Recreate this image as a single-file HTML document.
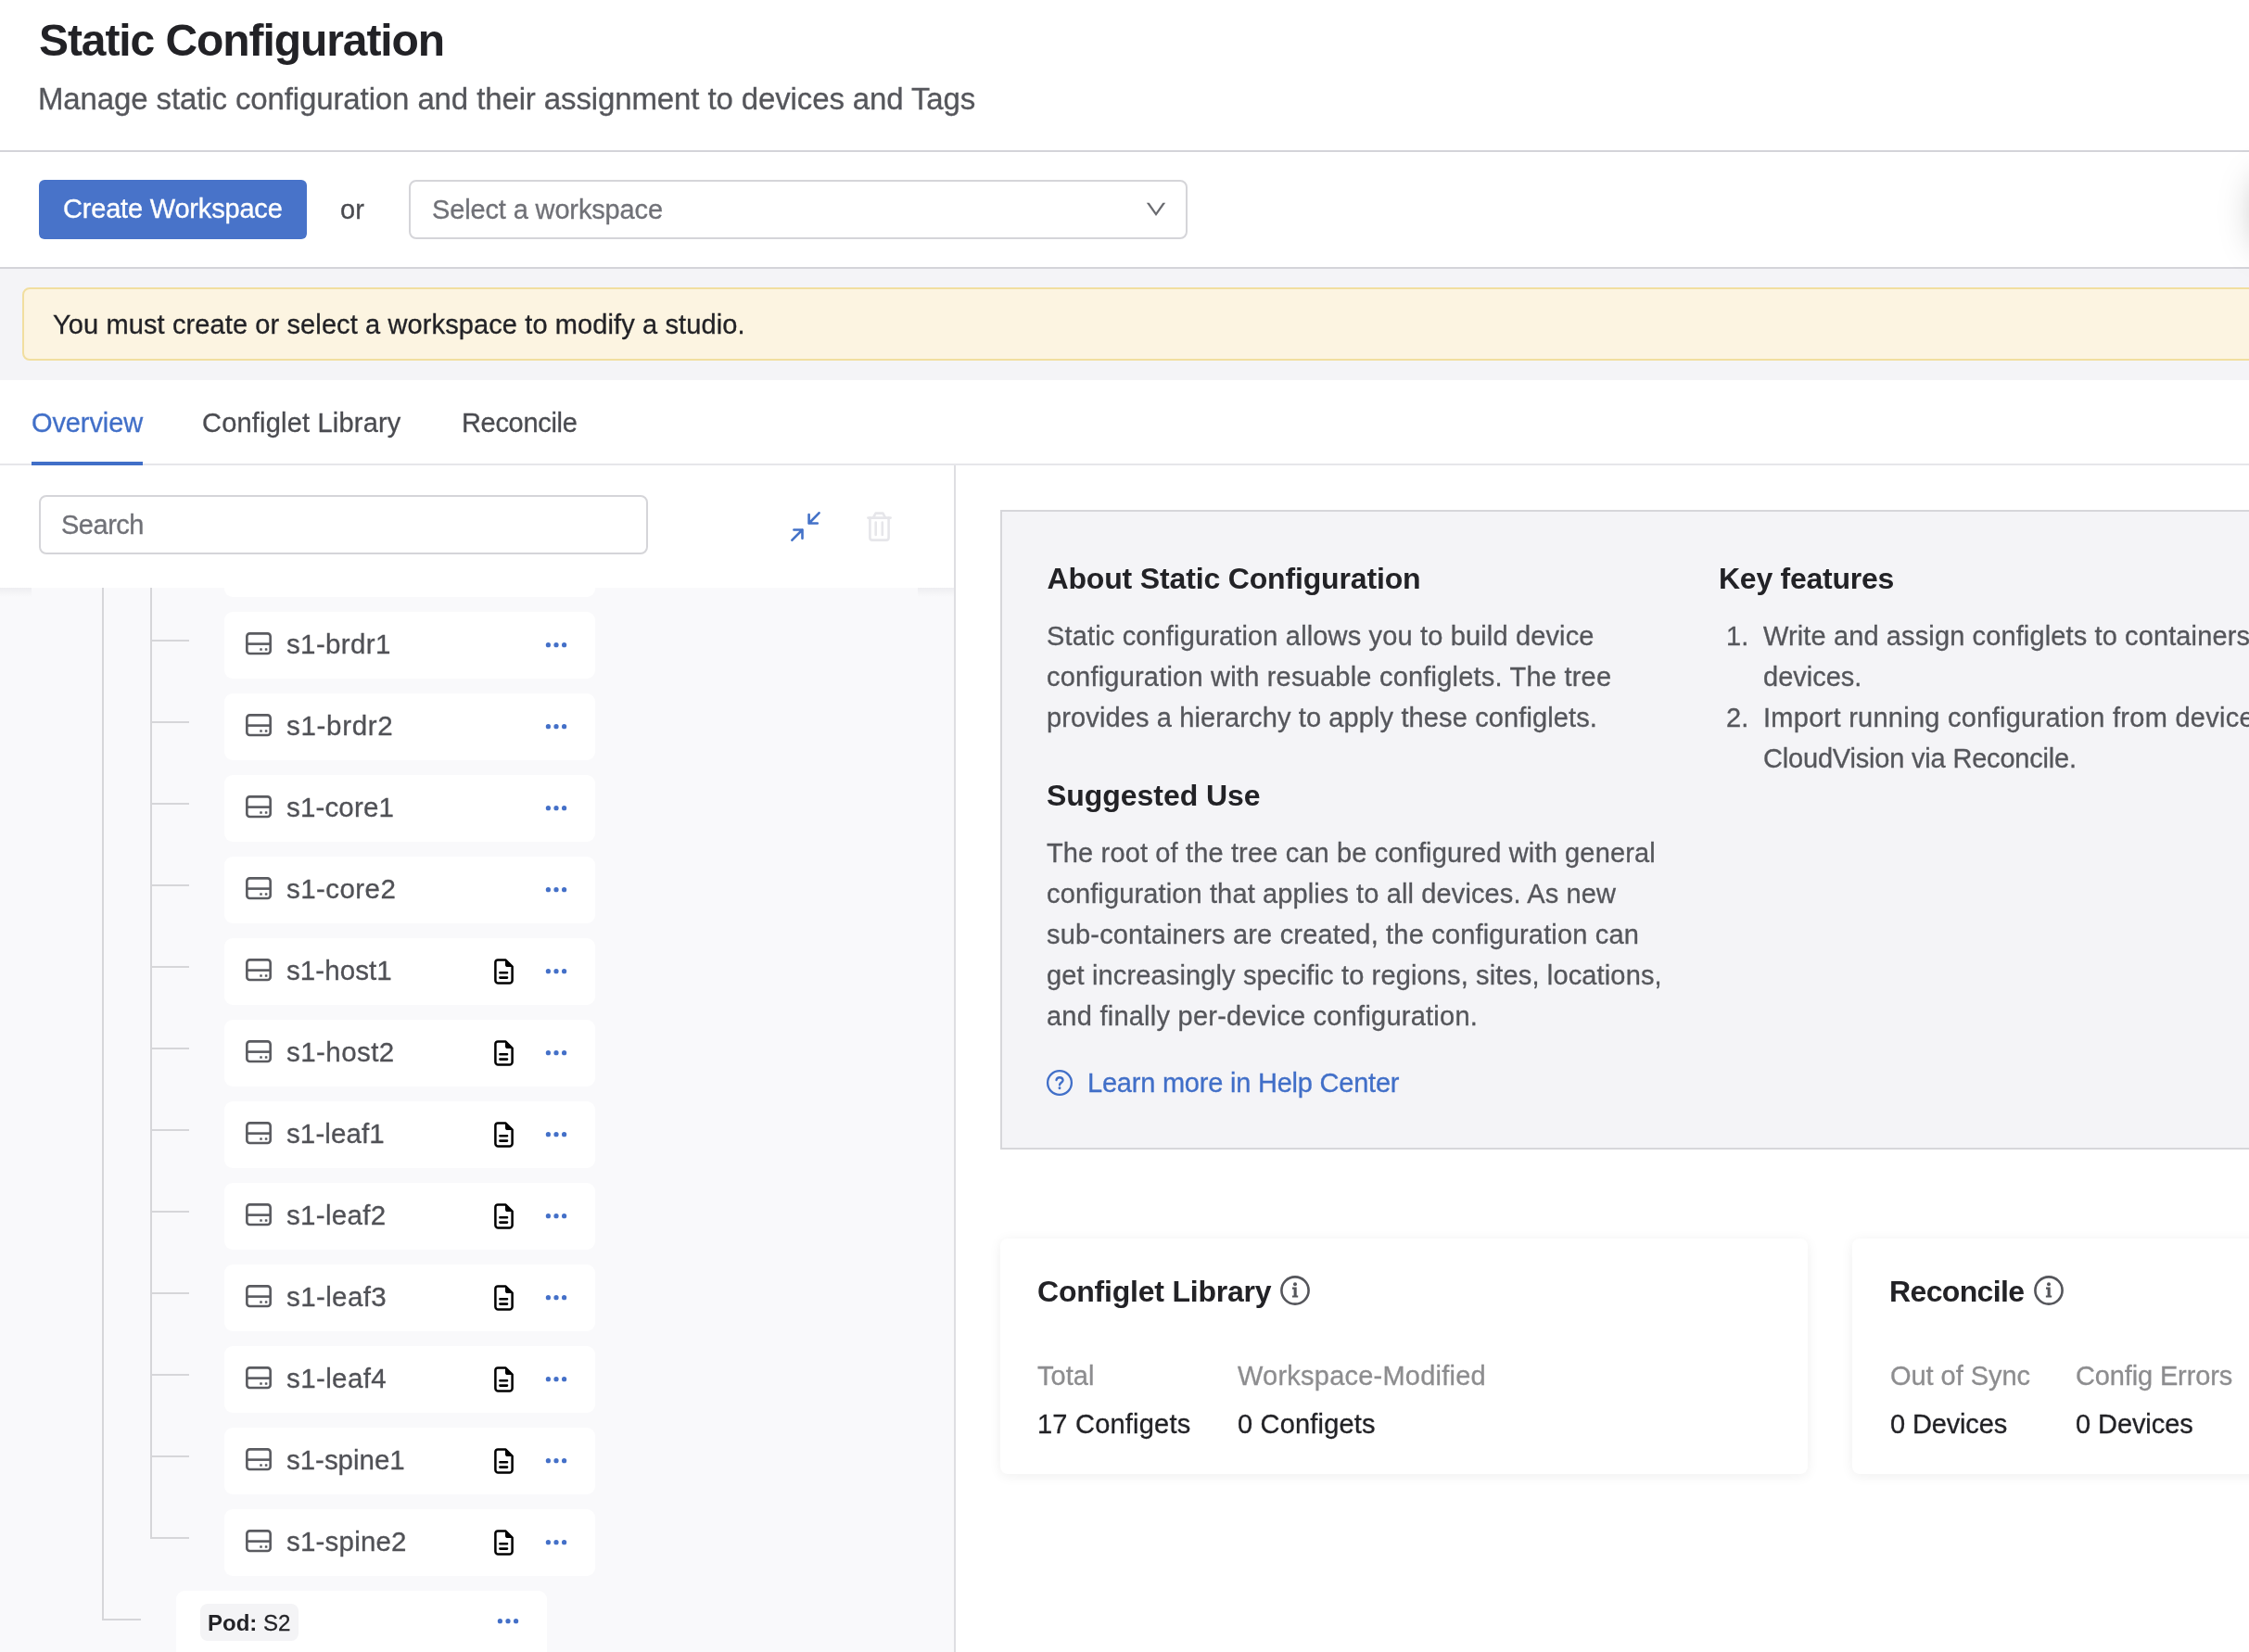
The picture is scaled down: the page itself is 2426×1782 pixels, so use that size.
<!DOCTYPE html>
<html lang="en">
<head>
<meta charset="utf-8">
<title>Static Configuration</title>
<style>
*{box-sizing:border-box;margin:0;padding:0}
html,body{width:2426px;height:1782px;overflow:hidden;background:#fff}
body{filter:opacity(1);font-family:"Liberation Sans",Arial,sans-serif;color:#55565b;position:relative;font-size:29px;-webkit-text-stroke:.3px}
.t{position:absolute;white-space:nowrap;line-height:1}
/* header */
#title{-webkit-text-stroke:0;left:42px;top:20px;font-size:48px;font-weight:700;color:#222226}
#subtitle{left:41px;top:90px;font-size:33px;color:#55565b}
.hline{position:absolute;left:0;width:2426px;height:2px;background:#d4d4d9}
/* workspace bar */
#btn{position:absolute;left:42px;top:194px;width:289px;height:64px;border-radius:6px;background:#4873c9}
#btn span{position:absolute;left:26px;top:17px;-webkit-text-stroke:.35px #fff;font-size:29px;color:#fff;line-height:1;white-space:nowrap}
#or{left:367px;top:211.5px;font-size:29px;color:#4a4b50}
#select{position:absolute;left:441px;top:194px;width:840px;height:64px;border:2px solid #d5d5d9;border-radius:8px;background:#fff}
#select span{position:absolute;left:23px;top:15.5px;font-size:29px;color:#707177;line-height:1;white-space:nowrap}
#band{position:absolute;left:0;top:290px;width:2426px;height:119.5px;background:#f4f4f7}
#alert{position:absolute;left:24px;top:310px;width:2460px;height:79px;background:#fcf4e1;border:2px solid #f1de9f;border-radius:8px}
#alert span{position:absolute;left:31px;top:24px;font-size:29px;color:#222226;line-height:1;white-space:nowrap}
/* tabs */
.tab{position:absolute;top:442px;font-size:29px;line-height:1;white-space:nowrap;color:#4a4b50}
#tabline{position:absolute;left:0;top:500px;width:2426px;height:2px;background:#e6e6ea}
#tabink{position:absolute;left:34px;top:498px;width:120px;height:4px;background:#416fc8}
/* left panel */
#left{position:absolute;left:0;top:502px;width:1029px;height:1280px;background:#f9f9fb;overflow:hidden}
#vdiv{position:absolute;left:1029px;top:502px;width:2px;height:1280px;background:#dedee2}
#lhead{position:absolute;left:0;top:0;width:1029px;height:132px;background:#fff}
#search{position:absolute;left:42px;top:32px;width:657px;height:64px;border:2px solid #d5d5d9;border-radius:8px;background:#fff}
#search span{position:absolute;left:22px;top:16px;font-size:29px;color:#707177;line-height:1}
.vl{position:absolute;width:2px;background:#d6d6d9}
.hl{position:absolute;height:2px;background:#d6d6d9}
.card{position:absolute;left:242px;width:400px;height:72px;background:#fff;border-radius:9px}
.card .nm{position:absolute;left:67px;top:20px;font-size:29.5px;line-height:1;color:#505156;white-space:nowrap;letter-spacing:.05px}
.card svg.dev{position:absolute;left:22px;top:21px}
.card svg.doc{position:absolute;left:290px;top:20.6px}
.card svg.dots{position:absolute;left:346px;top:32px}
/* right panel */
#about{position:absolute;left:1079px;top:550px;width:1400px;height:690px;background:#f4f4f7;border:2px solid #d6d6da}
.h3{-webkit-text-stroke:0;position:absolute;font-size:32px;font-weight:700;color:#222226;line-height:1;white-space:nowrap}
.p{position:absolute;font-size:29px;line-height:44px;color:#55565b;white-space:nowrap}
.scard{position:absolute;top:1336px;height:254px;background:#fff;border-radius:8px;box-shadow:0 2px 14px rgba(0,0,0,.065)}
.lbl{position:absolute;font-size:29px;line-height:1;color:#8d8d8f;white-space:nowrap}
.val{position:absolute;font-size:29px;line-height:1;color:#222226;white-space:nowrap}

.tag{position:absolute;left:26px;top:14px;height:40px;width:106px;border-radius:8px;font-size:24px;line-height:41px;color:#222226;padding-left:8px;white-space:nowrap;background:#f4f4f6}
.tag b{font-weight:700;-webkit-text-stroke:0}
#lshadow{position:absolute;left:0;top:132px;width:1029px;height:10px;background:linear-gradient(#eeeef1,#f9f9fb)}
#lshadowmask{position:absolute;left:34px;top:132px;width:956px;height:10px;background:#f9f9fb}
ol{list-style:none}
</style>
<style id="fit">
#title{letter-spacing:-1.08px}
#subtitle{letter-spacing:-0.12px}
#btntxt{letter-spacing:-0.19px}
#or{letter-spacing:0.10px}
#seltxt{letter-spacing:-0.14px}
#alerttxt{letter-spacing:0.11px}
#tab1{letter-spacing:-0.11px}
#tab2{letter-spacing:0.20px}
#tab3{letter-spacing:-0.32px}
#searchtxt{letter-spacing:-0.48px}
#h_about{letter-spacing:-0.16px}
#p1a{letter-spacing:0.15px}
#p1b{letter-spacing:0.21px}
#p1c{letter-spacing:0.12px}
#h_sugg{letter-spacing:-0.05px}
#p2a{letter-spacing:0.14px}
#p2b{letter-spacing:0.13px}
#p2c{letter-spacing:0.18px}
#p2d{letter-spacing:0.14px}
#p2e{letter-spacing:0.24px}
#learn{letter-spacing:-0.22px}
#h_key{letter-spacing:-0.26px}
#k2b{letter-spacing:-0.19px}
#k1a,#k1a+.rest{letter-spacing:0.12px}
#k2a,#k2a+.rest{letter-spacing:0.27px}
#h_lib{letter-spacing:-0.21px}
#l_total{letter-spacing:0.05px}
#l_wsm{letter-spacing:0.23px}
#v_17{letter-spacing:0.22px}
#v_0c{letter-spacing:0.18px}
#h_rec{letter-spacing:-0.64px}
#l_oos{letter-spacing:-0.05px}
#l_ce{letter-spacing:-0.14px}
#v_d1{letter-spacing:-0.15px}
#v_d2{letter-spacing:-0.08px}
</style>
</head>
<body>
<!-- header -->
<div class="t" id="title">Static Configuration</div>
<div class="t" id="subtitle">Manage static configuration and their assignment to devices and Tags</div>
<div class="hline" style="top:162px"></div>
<!-- workspace bar -->
<div id="btn"><span id="btntxt">Create Workspace</span></div>
<div class="t" id="or">or</div>
<div id="select"><span id="seltxt">Select a workspace</span>
<svg style="position:absolute;left:793px;top:22px" width="22" height="16" viewBox="0 0 22 16"><path d="M.8 .8H3.7L11 11.2L18.3 .8H21.2L11 15Z" fill="#6a6b70"/></svg>
</div>
<div class="hline" style="top:288px"></div>
<div id="band"></div>
<div id="alert"><span id="alerttxt">You must create or select a workspace to modify a studio.</span></div>
<div style="position:absolute;left:2440px;top:196px;width:120px;height:62px;border-radius:8px;box-shadow:0 2px 40px 5px rgba(0,0,0,.27)"></div>
<!-- tabs -->
<div class="tab" id="tab1" style="left:34px;color:#416fc8">Overview</div>
<div class="tab" id="tab2" style="left:218px">Configlet Library</div>
<div class="tab" id="tab3" style="left:498px">Reconcile</div>
<div id="tabline"></div>
<div id="tabink"></div>
<!-- left panel -->
<div id="left">
<div id="lshadow"></div><div id="lshadowmask"></div>
<div id="tree">
<div class="vl" style="left:110px;top:0;height:1246px"></div>
<div class="vl" style="left:162px;top:0;height:1158px"></div>
<div class="card" style="top:70px"></div>
<div class="hl" style="left:162px;top:188px;width:42px"></div>
<div class="card" style="top:158px"><svg class="dev" width="30" height="26" viewBox="0 0 30 26"><rect x="2.35" y="2.35" width="25.3" height="21.7" rx="3.1" fill="none" stroke="#5a5b60" stroke-width="2.6"/><path d="M2.5 13.6H27.5" stroke="#5a5b60" stroke-width="2.6"/><rect x="16.2" y="18.2" width="2.6" height="2.6" rx=".6" fill="#5a5b60"/><rect x="21.8" y="18.2" width="2.6" height="2.6" rx=".6" fill="#5a5b60"/></svg><span class="nm" style="letter-spacing:0.36px">s1-brdr1</span><svg class="dots" width="26" height="8" viewBox="0 0 26 8"><circle cx="3.4" cy="3.7" r="2.6" fill="#4470c8"/><circle cx="12" cy="3.7" r="2.6" fill="#4470c8"/><circle cx="20.6" cy="3.7" r="2.6" fill="#4470c8"/></svg></div>
<div class="hl" style="left:162px;top:276px;width:42px"></div>
<div class="card" style="top:246px"><svg class="dev" width="30" height="26" viewBox="0 0 30 26"><rect x="2.35" y="2.35" width="25.3" height="21.7" rx="3.1" fill="none" stroke="#5a5b60" stroke-width="2.6"/><path d="M2.5 13.6H27.5" stroke="#5a5b60" stroke-width="2.6"/><rect x="16.2" y="18.2" width="2.6" height="2.6" rx=".6" fill="#5a5b60"/><rect x="21.8" y="18.2" width="2.6" height="2.6" rx=".6" fill="#5a5b60"/></svg><span class="nm" style="letter-spacing:0.69px">s1-brdr2</span><svg class="dots" width="26" height="8" viewBox="0 0 26 8"><circle cx="3.4" cy="3.7" r="2.6" fill="#4470c8"/><circle cx="12" cy="3.7" r="2.6" fill="#4470c8"/><circle cx="20.6" cy="3.7" r="2.6" fill="#4470c8"/></svg></div>
<div class="hl" style="left:162px;top:364px;width:42px"></div>
<div class="card" style="top:334px"><svg class="dev" width="30" height="26" viewBox="0 0 30 26"><rect x="2.35" y="2.35" width="25.3" height="21.7" rx="3.1" fill="none" stroke="#5a5b60" stroke-width="2.6"/><path d="M2.5 13.6H27.5" stroke="#5a5b60" stroke-width="2.6"/><rect x="16.2" y="18.2" width="2.6" height="2.6" rx=".6" fill="#5a5b60"/><rect x="21.8" y="18.2" width="2.6" height="2.6" rx=".6" fill="#5a5b60"/></svg><span class="nm" style="letter-spacing:0.16px">s1-core1</span><svg class="dots" width="26" height="8" viewBox="0 0 26 8"><circle cx="3.4" cy="3.7" r="2.6" fill="#4470c8"/><circle cx="12" cy="3.7" r="2.6" fill="#4470c8"/><circle cx="20.6" cy="3.7" r="2.6" fill="#4470c8"/></svg></div>
<div class="hl" style="left:162px;top:452px;width:42px"></div>
<div class="card" style="top:422px"><svg class="dev" width="30" height="26" viewBox="0 0 30 26"><rect x="2.35" y="2.35" width="25.3" height="21.7" rx="3.1" fill="none" stroke="#5a5b60" stroke-width="2.6"/><path d="M2.5 13.6H27.5" stroke="#5a5b60" stroke-width="2.6"/><rect x="16.2" y="18.2" width="2.6" height="2.6" rx=".6" fill="#5a5b60"/><rect x="21.8" y="18.2" width="2.6" height="2.6" rx=".6" fill="#5a5b60"/></svg><span class="nm" style="letter-spacing:0.44px">s1-core2</span><svg class="dots" width="26" height="8" viewBox="0 0 26 8"><circle cx="3.4" cy="3.7" r="2.6" fill="#4470c8"/><circle cx="12" cy="3.7" r="2.6" fill="#4470c8"/><circle cx="20.6" cy="3.7" r="2.6" fill="#4470c8"/></svg></div>
<div class="hl" style="left:162px;top:540px;width:42px"></div>
<div class="card" style="top:510px"><svg class="dev" width="30" height="26" viewBox="0 0 30 26"><rect x="2.35" y="2.35" width="25.3" height="21.7" rx="3.1" fill="none" stroke="#5a5b60" stroke-width="2.6"/><path d="M2.5 13.6H27.5" stroke="#5a5b60" stroke-width="2.6"/><rect x="16.2" y="18.2" width="2.6" height="2.6" rx=".6" fill="#5a5b60"/><rect x="21.8" y="18.2" width="2.6" height="2.6" rx=".6" fill="#5a5b60"/></svg><span class="nm" style="letter-spacing:0.09px">s1-host1</span><svg class="doc" width="23" height="30" viewBox="0 0 23 30"><path d="M5 2.4H13.2L20.6 9.6V24.6A3 3 0 0 1 17.6 27.6H5.4A3 3 0 0 1 2.4 24.6V5A2.6 2.6 0 0 1 5 2.4Z" fill="none" stroke="#000" stroke-width="2.5" stroke-linejoin="round"/><path d="M13.6 2.6L20.4 9.4H15.6A2 2 0 0 1 13.6 7.4Z" fill="#000" stroke="#000" stroke-width="1.2" stroke-linejoin="round"/><path d="M7.4 16.3H15M7.4 21.6H15" stroke="#000" stroke-width="2.6" stroke-linecap="round"/></svg><svg class="dots" width="26" height="8" viewBox="0 0 26 8"><circle cx="3.4" cy="3.7" r="2.6" fill="#4470c8"/><circle cx="12" cy="3.7" r="2.6" fill="#4470c8"/><circle cx="20.6" cy="3.7" r="2.6" fill="#4470c8"/></svg></div>
<div class="hl" style="left:162px;top:628px;width:42px"></div>
<div class="card" style="top:598px"><svg class="dev" width="30" height="26" viewBox="0 0 30 26"><rect x="2.35" y="2.35" width="25.3" height="21.7" rx="3.1" fill="none" stroke="#5a5b60" stroke-width="2.6"/><path d="M2.5 13.6H27.5" stroke="#5a5b60" stroke-width="2.6"/><rect x="16.2" y="18.2" width="2.6" height="2.6" rx=".6" fill="#5a5b60"/><rect x="21.8" y="18.2" width="2.6" height="2.6" rx=".6" fill="#5a5b60"/></svg><span class="nm" style="letter-spacing:0.44px">s1-host2</span><svg class="doc" width="23" height="30" viewBox="0 0 23 30"><path d="M5 2.4H13.2L20.6 9.6V24.6A3 3 0 0 1 17.6 27.6H5.4A3 3 0 0 1 2.4 24.6V5A2.6 2.6 0 0 1 5 2.4Z" fill="none" stroke="#000" stroke-width="2.5" stroke-linejoin="round"/><path d="M13.6 2.6L20.4 9.4H15.6A2 2 0 0 1 13.6 7.4Z" fill="#000" stroke="#000" stroke-width="1.2" stroke-linejoin="round"/><path d="M7.4 16.3H15M7.4 21.6H15" stroke="#000" stroke-width="2.6" stroke-linecap="round"/></svg><svg class="dots" width="26" height="8" viewBox="0 0 26 8"><circle cx="3.4" cy="3.7" r="2.6" fill="#4470c8"/><circle cx="12" cy="3.7" r="2.6" fill="#4470c8"/><circle cx="20.6" cy="3.7" r="2.6" fill="#4470c8"/></svg></div>
<div class="hl" style="left:162px;top:716px;width:42px"></div>
<div class="card" style="top:686px"><svg class="dev" width="30" height="26" viewBox="0 0 30 26"><rect x="2.35" y="2.35" width="25.3" height="21.7" rx="3.1" fill="none" stroke="#5a5b60" stroke-width="2.6"/><path d="M2.5 13.6H27.5" stroke="#5a5b60" stroke-width="2.6"/><rect x="16.2" y="18.2" width="2.6" height="2.6" rx=".6" fill="#5a5b60"/><rect x="21.8" y="18.2" width="2.6" height="2.6" rx=".6" fill="#5a5b60"/></svg><span class="nm" style="letter-spacing:0.11px">s1-leaf1</span><svg class="doc" width="23" height="30" viewBox="0 0 23 30"><path d="M5 2.4H13.2L20.6 9.6V24.6A3 3 0 0 1 17.6 27.6H5.4A3 3 0 0 1 2.4 24.6V5A2.6 2.6 0 0 1 5 2.4Z" fill="none" stroke="#000" stroke-width="2.5" stroke-linejoin="round"/><path d="M13.6 2.6L20.4 9.4H15.6A2 2 0 0 1 13.6 7.4Z" fill="#000" stroke="#000" stroke-width="1.2" stroke-linejoin="round"/><path d="M7.4 16.3H15M7.4 21.6H15" stroke="#000" stroke-width="2.6" stroke-linecap="round"/></svg><svg class="dots" width="26" height="8" viewBox="0 0 26 8"><circle cx="3.4" cy="3.7" r="2.6" fill="#4470c8"/><circle cx="12" cy="3.7" r="2.6" fill="#4470c8"/><circle cx="20.6" cy="3.7" r="2.6" fill="#4470c8"/></svg></div>
<div class="hl" style="left:162px;top:804px;width:42px"></div>
<div class="card" style="top:774px"><svg class="dev" width="30" height="26" viewBox="0 0 30 26"><rect x="2.35" y="2.35" width="25.3" height="21.7" rx="3.1" fill="none" stroke="#5a5b60" stroke-width="2.6"/><path d="M2.5 13.6H27.5" stroke="#5a5b60" stroke-width="2.6"/><rect x="16.2" y="18.2" width="2.6" height="2.6" rx=".6" fill="#5a5b60"/><rect x="21.8" y="18.2" width="2.6" height="2.6" rx=".6" fill="#5a5b60"/></svg><span class="nm" style="letter-spacing:0.31px">s1-leaf2</span><svg class="doc" width="23" height="30" viewBox="0 0 23 30"><path d="M5 2.4H13.2L20.6 9.6V24.6A3 3 0 0 1 17.6 27.6H5.4A3 3 0 0 1 2.4 24.6V5A2.6 2.6 0 0 1 5 2.4Z" fill="none" stroke="#000" stroke-width="2.5" stroke-linejoin="round"/><path d="M13.6 2.6L20.4 9.4H15.6A2 2 0 0 1 13.6 7.4Z" fill="#000" stroke="#000" stroke-width="1.2" stroke-linejoin="round"/><path d="M7.4 16.3H15M7.4 21.6H15" stroke="#000" stroke-width="2.6" stroke-linecap="round"/></svg><svg class="dots" width="26" height="8" viewBox="0 0 26 8"><circle cx="3.4" cy="3.7" r="2.6" fill="#4470c8"/><circle cx="12" cy="3.7" r="2.6" fill="#4470c8"/><circle cx="20.6" cy="3.7" r="2.6" fill="#4470c8"/></svg></div>
<div class="hl" style="left:162px;top:892px;width:42px"></div>
<div class="card" style="top:862px"><svg class="dev" width="30" height="26" viewBox="0 0 30 26"><rect x="2.35" y="2.35" width="25.3" height="21.7" rx="3.1" fill="none" stroke="#5a5b60" stroke-width="2.6"/><path d="M2.5 13.6H27.5" stroke="#5a5b60" stroke-width="2.6"/><rect x="16.2" y="18.2" width="2.6" height="2.6" rx=".6" fill="#5a5b60"/><rect x="21.8" y="18.2" width="2.6" height="2.6" rx=".6" fill="#5a5b60"/></svg><span class="nm" style="letter-spacing:0.39px">s1-leaf3</span><svg class="doc" width="23" height="30" viewBox="0 0 23 30"><path d="M5 2.4H13.2L20.6 9.6V24.6A3 3 0 0 1 17.6 27.6H5.4A3 3 0 0 1 2.4 24.6V5A2.6 2.6 0 0 1 5 2.4Z" fill="none" stroke="#000" stroke-width="2.5" stroke-linejoin="round"/><path d="M13.6 2.6L20.4 9.4H15.6A2 2 0 0 1 13.6 7.4Z" fill="#000" stroke="#000" stroke-width="1.2" stroke-linejoin="round"/><path d="M7.4 16.3H15M7.4 21.6H15" stroke="#000" stroke-width="2.6" stroke-linecap="round"/></svg><svg class="dots" width="26" height="8" viewBox="0 0 26 8"><circle cx="3.4" cy="3.7" r="2.6" fill="#4470c8"/><circle cx="12" cy="3.7" r="2.6" fill="#4470c8"/><circle cx="20.6" cy="3.7" r="2.6" fill="#4470c8"/></svg></div>
<div class="hl" style="left:162px;top:980px;width:42px"></div>
<div class="card" style="top:950px"><svg class="dev" width="30" height="26" viewBox="0 0 30 26"><rect x="2.35" y="2.35" width="25.3" height="21.7" rx="3.1" fill="none" stroke="#5a5b60" stroke-width="2.6"/><path d="M2.5 13.6H27.5" stroke="#5a5b60" stroke-width="2.6"/><rect x="16.2" y="18.2" width="2.6" height="2.6" rx=".6" fill="#5a5b60"/><rect x="21.8" y="18.2" width="2.6" height="2.6" rx=".6" fill="#5a5b60"/></svg><span class="nm" style="letter-spacing:0.39px">s1-leaf4</span><svg class="doc" width="23" height="30" viewBox="0 0 23 30"><path d="M5 2.4H13.2L20.6 9.6V24.6A3 3 0 0 1 17.6 27.6H5.4A3 3 0 0 1 2.4 24.6V5A2.6 2.6 0 0 1 5 2.4Z" fill="none" stroke="#000" stroke-width="2.5" stroke-linejoin="round"/><path d="M13.6 2.6L20.4 9.4H15.6A2 2 0 0 1 13.6 7.4Z" fill="#000" stroke="#000" stroke-width="1.2" stroke-linejoin="round"/><path d="M7.4 16.3H15M7.4 21.6H15" stroke="#000" stroke-width="2.6" stroke-linecap="round"/></svg><svg class="dots" width="26" height="8" viewBox="0 0 26 8"><circle cx="3.4" cy="3.7" r="2.6" fill="#4470c8"/><circle cx="12" cy="3.7" r="2.6" fill="#4470c8"/><circle cx="20.6" cy="3.7" r="2.6" fill="#4470c8"/></svg></div>
<div class="hl" style="left:162px;top:1068px;width:42px"></div>
<div class="card" style="top:1038px"><svg class="dev" width="30" height="26" viewBox="0 0 30 26"><rect x="2.35" y="2.35" width="25.3" height="21.7" rx="3.1" fill="none" stroke="#5a5b60" stroke-width="2.6"/><path d="M2.5 13.6H27.5" stroke="#5a5b60" stroke-width="2.6"/><rect x="16.2" y="18.2" width="2.6" height="2.6" rx=".6" fill="#5a5b60"/><rect x="21.8" y="18.2" width="2.6" height="2.6" rx=".6" fill="#5a5b60"/></svg><span class="nm" style="letter-spacing:-0.03px">s1-spine1</span><svg class="doc" width="23" height="30" viewBox="0 0 23 30"><path d="M5 2.4H13.2L20.6 9.6V24.6A3 3 0 0 1 17.6 27.6H5.4A3 3 0 0 1 2.4 24.6V5A2.6 2.6 0 0 1 5 2.4Z" fill="none" stroke="#000" stroke-width="2.5" stroke-linejoin="round"/><path d="M13.6 2.6L20.4 9.4H15.6A2 2 0 0 1 13.6 7.4Z" fill="#000" stroke="#000" stroke-width="1.2" stroke-linejoin="round"/><path d="M7.4 16.3H15M7.4 21.6H15" stroke="#000" stroke-width="2.6" stroke-linecap="round"/></svg><svg class="dots" width="26" height="8" viewBox="0 0 26 8"><circle cx="3.4" cy="3.7" r="2.6" fill="#4470c8"/><circle cx="12" cy="3.7" r="2.6" fill="#4470c8"/><circle cx="20.6" cy="3.7" r="2.6" fill="#4470c8"/></svg></div>
<div class="hl" style="left:162px;top:1156px;width:42px"></div>
<div class="card" style="top:1126px"><svg class="dev" width="30" height="26" viewBox="0 0 30 26"><rect x="2.35" y="2.35" width="25.3" height="21.7" rx="3.1" fill="none" stroke="#5a5b60" stroke-width="2.6"/><path d="M2.5 13.6H27.5" stroke="#5a5b60" stroke-width="2.6"/><rect x="16.2" y="18.2" width="2.6" height="2.6" rx=".6" fill="#5a5b60"/><rect x="21.8" y="18.2" width="2.6" height="2.6" rx=".6" fill="#5a5b60"/></svg><span class="nm" style="letter-spacing:0.20px">s1-spine2</span><svg class="doc" width="23" height="30" viewBox="0 0 23 30"><path d="M5 2.4H13.2L20.6 9.6V24.6A3 3 0 0 1 17.6 27.6H5.4A3 3 0 0 1 2.4 24.6V5A2.6 2.6 0 0 1 5 2.4Z" fill="none" stroke="#000" stroke-width="2.5" stroke-linejoin="round"/><path d="M13.6 2.6L20.4 9.4H15.6A2 2 0 0 1 13.6 7.4Z" fill="#000" stroke="#000" stroke-width="1.2" stroke-linejoin="round"/><path d="M7.4 16.3H15M7.4 21.6H15" stroke="#000" stroke-width="2.6" stroke-linecap="round"/></svg><svg class="dots" width="26" height="8" viewBox="0 0 26 8"><circle cx="3.4" cy="3.7" r="2.6" fill="#4470c8"/><circle cx="12" cy="3.7" r="2.6" fill="#4470c8"/><circle cx="20.6" cy="3.7" r="2.6" fill="#4470c8"/></svg></div>
<div class="hl" style="left:110px;top:1244px;width:42px"></div>
<div class="card" style="left:190px;top:1214px;height:80px"><div class="tag"><b>Pod:</b> S2</div><svg class="dots" style="left:346px;top:29px" width="26" height="8" viewBox="0 0 26 8"><circle cx="3.4" cy="3.7" r="2.6" fill="#4470c8"/><circle cx="12" cy="3.7" r="2.6" fill="#4470c8"/><circle cx="20.6" cy="3.7" r="2.6" fill="#4470c8"/></svg></div>
</div>
<div id="lhead">
<div id="search"><span id="searchtxt">Search</span></div>
<svg style="position:absolute;left:853px;top:50px" width="32" height="32" viewBox="0 0 32 32" fill="none" stroke="#4472c8" stroke-width="2.6" stroke-linecap="round" stroke-linejoin="round"><path d="M30.5 1.3L19.6 12.5M19.6 3V12.5H28.8"/><path d="M1.4 30.7L12.5 19.5M3.4 19.5H12.5V28.8"/></svg>
<svg style="position:absolute;left:935px;top:50px" width="27" height="33" viewBox="0 0 27 33" fill="none" stroke="#e6e6ea" stroke-width="2.6" stroke-linecap="round" stroke-linejoin="round"><path d="M1.4 6.6H25.6"/><path d="M7 6.4L9.6 1.6H17.4L20 6.4"/><path d="M3.4 6.6V28A2.6 2.6 0 0 0 6 30.6H21A2.6 2.6 0 0 0 23.6 28V6.6"/><path d="M9.7 11.6V25M16.8 11.6V25"/></svg>
</div>
</div>
<div id="vdiv"></div>
<!-- right panel -->
<div id="about"></div>
<div class="h3" id="h_about" style="left:1129.5px;top:608px">About Static Configuration</div>
<div class="p" id="p1" style="left:1129px;top:664px"><span id="p1a">Static configuration allows you to build device</span><br><span id="p1b">configuration with resuable configlets. The tree</span><br><span id="p1c">provides a hierarchy to apply these configlets.</span></div>
<div class="h3" id="h_sugg" style="left:1129px;top:842px">Suggested Use</div>
<div class="p" id="p2" style="left:1129px;top:898px"><span id="p2a">The root of the tree can be configured with general</span><br><span id="p2b">configuration that applies to all devices. As new</span><br><span id="p2c">sub-containers are created, the configuration can</span><br><span id="p2d">get increasingly specific to regions, sites, locations,</span><br><span id="p2e">and finally per-device configuration.</span></div>
<svg style="position:absolute;left:1128px;top:1153px" width="30" height="30" viewBox="0 0 30 30" fill="none" stroke="#416fc8" stroke-width="2.3" stroke-linecap="round" stroke-linejoin="round"><circle cx="15" cy="15" r="12.9"/><path d="M11.5 12A3.6 3.4 0 0 1 18.6 12.2C18.6 14.4 15 15.1 15 17.4"/><circle cx="15" cy="20.7" r="1.45" fill="#416fc8" stroke="none"/></svg>
<div class="t" id="learn" style="left:1173px;top:1154px;font-size:29px;color:#416fc8">Learn more in Help Center</div>
<div class="h3" id="h_key" style="left:1854px;top:608px">Key features</div>
<ol>
<li class="p" style="left:1862px;top:664px">1.</li>
<li class="p" id="k1" style="left:1902px;top:664px"><span id="k1a">Write and assign configlets to </span><span class="rest">containers and</span><br><span id="k1b">devices.</span></li>
<li class="p" style="left:1862px;top:752px">2.</li>
<li class="p" id="k2" style="left:1902px;top:752px"><span id="k2a">Import running configuration from </span><span class="rest">devices into</span><br><span id="k2b">CloudVision via Reconcile.</span></li>
</ol>
<!-- summary cards -->
<div class="scard" style="left:1079px;width:871px"></div>
<div class="scard" style="left:1998px;width:871px"></div>
<div class="h3" id="h_lib" style="left:1119px;top:1377px">Configlet Library</div>
<svg class="info" style="position:absolute;left:1380px;top:1375px" width="34" height="34" viewBox="0 0 34 34"><circle cx="17" cy="17" r="14.6" fill="none" stroke="#55565b" stroke-width="2.6"/><circle cx="17" cy="10.2" r="2" fill="#55565b"/><path d="M14 13.6H18.7V22.4H20.2V24.6H13.9V22.4H15.6V15.8H14Z" fill="#55565b"/></svg>
<div class="lbl" id="l_total" style="left:1119px;top:1470px">Total</div>
<div class="lbl" id="l_wsm" style="left:1335px;top:1470px">Workspace-Modified</div>
<div class="val" id="v_17" style="left:1119px;top:1522px">17 Configets</div>
<div class="val" id="v_0c" style="left:1335px;top:1522px">0 Configets</div>
<div class="h3" id="h_rec" style="left:2038px;top:1377px">Reconcile</div>
<svg class="info" style="position:absolute;left:2193px;top:1375px" width="34" height="34" viewBox="0 0 34 34"><circle cx="17" cy="17" r="14.6" fill="none" stroke="#55565b" stroke-width="2.6"/><circle cx="17" cy="10.2" r="2" fill="#55565b"/><path d="M14 13.6H18.7V22.4H20.2V24.6H13.9V22.4H15.6V15.8H14Z" fill="#55565b"/></svg>
<div class="lbl" id="l_oos" style="left:2039px;top:1470px">Out of Sync</div>
<div class="lbl" id="l_ce" style="left:2239px;top:1470px">Config Errors</div>
<div class="val" id="v_d1" style="left:2039px;top:1522px">0 Devices</div>
<div class="val" id="v_d2" style="left:2239px;top:1522px">0 Devices</div>
</body>
</html>
